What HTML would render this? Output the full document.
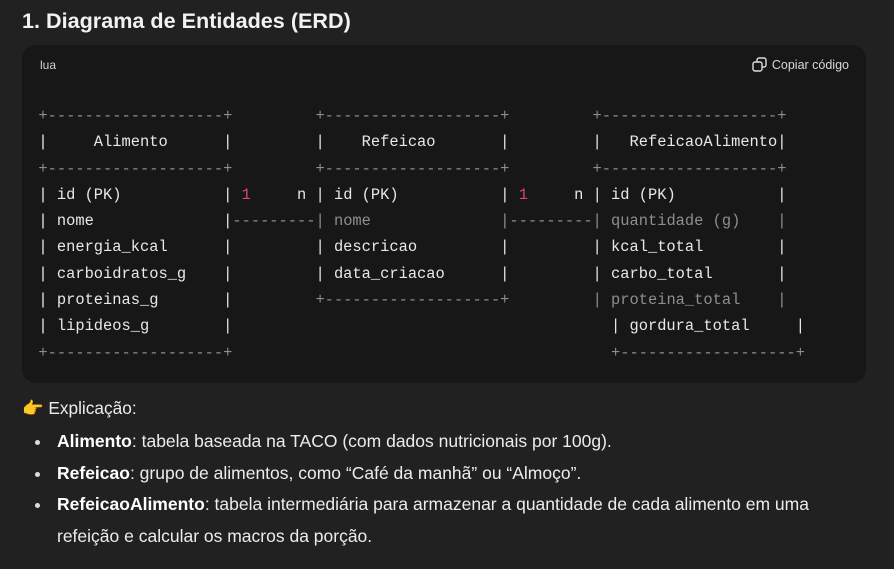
<!DOCTYPE html>
<html><head><meta charset="utf-8"><style>
html,body{margin:0;padding:0;background:#212121;width:894px;height:569px;overflow:hidden;color:#ececec;font-family:"Liberation Sans",sans-serif}
h1{position:absolute;left:22px;top:8px;margin:0;font-size:21.6px;font-weight:bold;color:#f2f2f2}
.code{position:absolute;left:22px;top:45px;width:844px;height:338px;background:#171717;border-radius:14px}
.lang{position:absolute;left:18px;top:13px;font-size:12px;color:#d0d0d0}
.copy{position:absolute;right:17px;top:12px;font-size:12.5px;color:#d8d8d8}
.copy svg{vertical-align:-3px;margin-right:5px}
pre{position:absolute;left:16.4px;top:58px;margin:0;font-family:"Liberation Mono",monospace;font-size:15.4px;line-height:26.3px;color:#e8e8e8;white-space:pre}
.b{color:#8e8e8e}.g{color:#8e8e8e}.r{color:#e0407a}
.exp{position:absolute;left:22px;top:398px;font-size:17.3px;color:#ececec}
ul{position:absolute;left:0;top:426px;margin:0;padding:0 0 0 57px;width:775px;list-style:none;font-size:17.5px;line-height:31.5px}
li{position:relative}
li:before{content:"";position:absolute;left:-22px;top:14px;width:5px;height:5px;border-radius:50%;background:#ddd}
b{font-weight:bold;color:#fff}
</style></head><body>
<h1>1. Diagrama de Entidades (ERD)</h1>
<div class="code">
<div class="lang">lua</div>
<div class="copy"><svg width="15" height="15" viewBox="0 0 15 15" fill="none" stroke="#ddd" stroke-width="1.4"><rect x="1" y="5" width="9" height="9" rx="2"/><path d="M5 5V3a2 2 0 0 1 2-2h5a2 2 0 0 1 2 2v5a2 2 0 0 1-2 2h-2"/></svg>Copiar código</div>
<pre><span class="b">+-------------------+         +-------------------+         +-------------------+</span>
|     Alimento      |         |    Refeicao       |         |   RefeicaoAlimento|
<span class="b">+-------------------+         +-------------------+         +-------------------+</span>
| id (PK)           | <span class="r">1</span>     n | id (PK)           | <span class="r">1</span>     n | id (PK)           |
| nome              |<span class="g">---------| nome              |---------| quantidade (g)    |</span>
| energia_kcal      |         | descricao         |         | kcal_total        |
| carboidratos_g    |         | data_criacao      |         | carbo_total       |
| proteinas_g       |         <span class="b">+-------------------+</span>         <span class="g">| proteina_total    |</span>
| lipideos_g        |                                         | gordura_total     |
<span class="b">+-------------------+                                         +-------------------+</span></pre>
</div>
<div class="exp">👉 Explicação:</div>
<ul>
<li><b>Alimento</b>: tabela baseada na TACO (com dados nutricionais por 100g).</li>
<li><b>Refeicao</b>: grupo de alimentos, como “Café da manhã” ou “Almoço”.</li>
<li><b>RefeicaoAlimento</b>: tabela intermediária para armazenar a quantidade de cada alimento em uma refeição e calcular os macros da porção.</li>
</ul>
</body></html>
